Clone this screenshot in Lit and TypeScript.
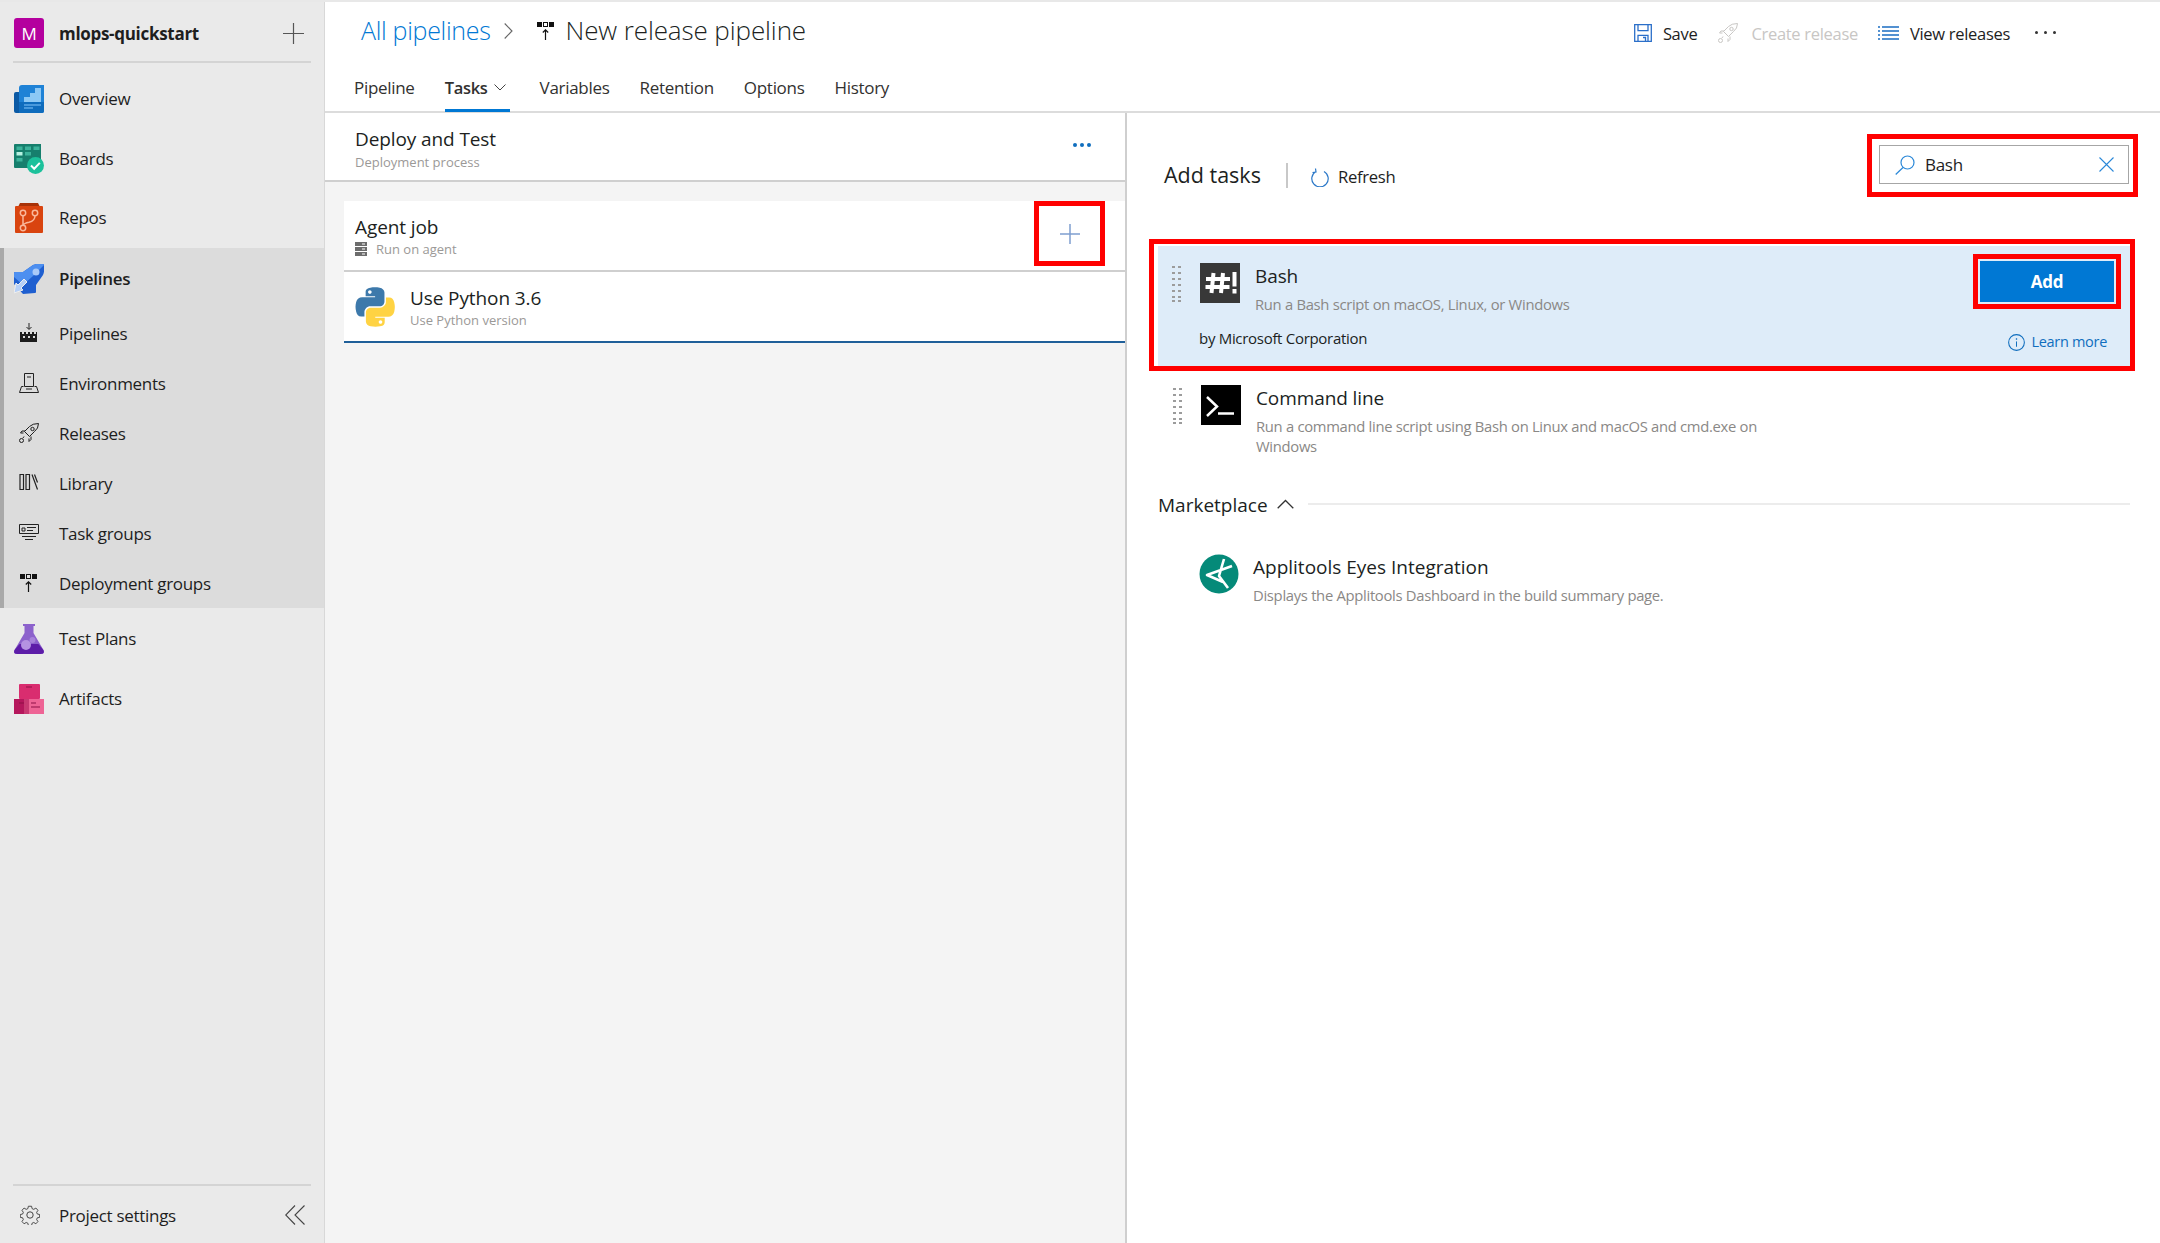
import {LitElement, html, css, svg} from 'lit';
import {customElement} from 'lit/decorators.js';

const icons = {
  overview: svg`<svg width="30" height="28" viewBox="0 0 30 28"><path d="M0 9q0-2 2-2h6v21H2q-2 0-2-2z" fill="#0b5aa5"/><path d="M5 3q0-3 3-3h22v26q0 2-2 2H5z" fill="#1f82d6"/><path d="M5 17h25v9q0 2-2 2H5z" fill="#0f6cbd"/><path d="M10 17v-5h6V8h5V3h6v14z" fill="#8cc8f5"/><path d="M10 20h17M10 23h9" stroke="#5ea8e6" stroke-width="1.4"/></svg>`,
  boards: svg`<svg width="30" height="30" viewBox="0 0 30 30"><path d="M0 1q0-1 1-1h26v18l-9 6H1q-1 0-1-1z" fill="#167f6d"/><g fill="#3cb39b"><rect x="2.500" y="2.500" width="6" height="3.500"/><rect x="11" y="2.500" width="6" height="3.500"/><rect x="19.500" y="2.500" width="6" height="3.500"/><rect x="11" y="8" width="6" height="3.500"/><rect x="2.500" y="14" width="6" height="3.500"/></g><rect x="2.500" y="8" width="6" height="3.500" fill="#b6f2e2"/><circle cx="21.500" cy="21.500" r="8.500" fill="#1cc19b"/><path d="M17 21.500l3.200 3.200 5.600-5.800" fill="none" stroke="#fff" stroke-width="2"/></svg>`,
  repos: svg`<svg width="28" height="30" viewBox="0 0 28 30"><path d="M3 4 5 0h18l2 4z" fill="#a83208"/><path d="M1 3h26q1 0 1 1v25q0 1-1 1H1q-1 0-1-1V4q0-1 1-1z" fill="#d9440f"/><g fill="none" stroke="#f9b79a" stroke-width="1.500"><circle cx="8" cy="10" r="2.700"/><circle cx="20" cy="10" r="2.700"/><circle cx="8" cy="25" r="2.700"/><path d="M8 12.700v9.600M20 12.700q0 5-6 6.500-5 1-6 3"/></g></svg>`,
  rocket: svg`<svg width="30" height="30" viewBox="0 0 30 30"><path d="M0 9q0-1 1-1h8L19 1q5-2 10-1 1 0 1 1 1 5-1 10l-7 10v7q0 1-1 1L9 30 0 20z" fill="#1f5fd0"/><path d="M9 8 19 1q5-2 10-1 1 0 1 1L19 12 9 21 0 13V9q0-1 1-1z" fill="#4d8ff0"/><circle cx="22" cy="8" r="3.500" fill="#a9c9f8"/><path d="M2 19l2 2 6-6 3 3-6 6 2 2-9 3z" fill="#b6d0f7" stroke="#eee" stroke-width="1"/></svg>`,
  flask: svg`<svg width="30" height="30" viewBox="0 0 30 30"><path d="M9 0h12v2h-1.500v7l10 17q2 4-3 4H3.500q-5 0-3-4l10-17V2H9z" fill="#8c62cc"/><path d="M5.600 20h18.800l5 6q1.500 4-3 4H3.500q-4.500 0-3-4z" fill="#5d1da8"/><circle cx="12" cy="21" r="5" fill="#b592e2"/><circle cx="18.500" cy="16" r="3" fill="#a783da"/></svg>`,
  artifacts: svg`<svg width="30" height="30" viewBox="0 0 30 30"><rect x="5" y="0" width="21" height="15" rx="1" fill="#d92d6f"/><rect x="0" y="15" width="15" height="15" fill="#b5175c"/><rect x="10" y="15" width="20" height="15" fill="#ee6495"/><rect x="10" y="15" width="5" height="15" fill="#c93a72"/><path d="M12 3h6M5 19h5M17 19h5M17 23h9" stroke="#8f1046" stroke-width="1"/></svg>`,
  pipe: svg`<svg width="20" height="20" viewBox="0 0 20 20"><path d="M10 0v6M7.500 4l2.500 2.500L12.500 4" fill="none" stroke="#222" stroke-width="1"/><path d="M1 9h2v2h2V9h2v2h2V9h2v2h2V9h2v2h2V9h1v10H1z" fill="#1c1c1c"/><g fill="#dcdcdc"><rect x="4" y="13" width="2" height="2"/><rect x="9" y="13" width="2" height="2"/><rect x="14" y="13" width="2" height="2"/></g></svg>`,
  env: svg`<svg width="20" height="20" viewBox="0 0 20 20" fill="none" stroke="#222" stroke-width="1"><path d="M5.500.5h9v13h-9zM2.500 13.500h2M15.500 13.500h2M2.500 13.500.5 19.500h19l-2-6"/><path d="M8 4h4M7 16h6"/></svg>`,
  release: svg`<svg width="20" height="20" viewBox="0 0 20 20" fill="none" stroke="currentColor" stroke-width="1"><path d="M19.500.5q-6 0-9 3l-5 5 5 5 5-5q4-3 4-8zM6 8H3L1.500 10h3M12 13.500v3l-2 2v-3"/><circle cx="13.500" cy="6" r="1.700"/><circle cx="2.500" cy="17.500" r="2"/><path d="M5 13.500 4 15"/></svg>`,
  library: svg`<svg width="20" height="20" viewBox="0 0 20 20" fill="none" stroke="#222" stroke-width="1.200"><path d="M1 1.500h3.500v15H1zM7 1.500h3.500v15H7zM13 1.500l5.500 15M15.500 1.500l3 8"/></svg>`,
  tasks: svg`<svg width="20" height="20" viewBox="0 0 20 20" fill="none" stroke="#222" stroke-width="1"><path d="M.5 1.500h19v9H.5zM3 5h3v3H3zM8 4.500h9M8 7.500h6M3 13.500h14M6 16.500h8"/></svg>`,
  deploy: svg`<svg width="20" height="20" viewBox="0 0 20 20"><rect x="1" y="1" width="5" height="5" fill="#111"/><rect x="7.500" y="1.500" width="4" height="4" fill="none" stroke="#111"/><rect x="13" y="1" width="5" height="5" fill="#111"/><path d="M9.500 19V9M6.800 11.500l2.700-2.700 2.700 2.700" fill="none" stroke="#111" stroke-width="1.200"/></svg>`,
  gear: svg`<svg width="20" height="20" viewBox="0 0 20 20" fill="none" stroke="#444" stroke-width="1"><circle cx="10" cy="10" r="3.200"/><path d="M8.300.8h3.400l.5 2.500 1.800.8 2.200-1.400 2.200 2.400-1.400 2.100.7 1.800 2.500.5v3l-2.500.5-.7 1.800 1.400 2.100-2.200 2.400-2.200-1.400-1.800.8-.5 2.500H8.300l-.5-2.500-1.800-.8-2.200 1.400-2.200-2.400 1.400-2.100-.7-1.800-2.500-.5v-3l2.500-.5.7-1.800-1.400-2.100 2.200-2.400L6 4.100l1.800-.8z" transform="scale(.95) translate(.5 .5)"/></svg>`,
  python: svg`<svg width="40" height="40" viewBox="0 0 110 112"><path d="M54.900.8c-4.600 0-9 .4-12.800 1.100C30.800 3.900 28.800 8 28.800 15.600v10h26.500v3.300H18.800c-7.700 0-14.400 4.600-16.500 13.400-2.400 10.100-2.500 16.400 0 26.900 1.900 7.800 6.300 13.400 14 13.400h9.100V70.500c0-8.700 7.600-16.400 16.500-16.400h26.400c7.400 0 13.200-6 13.200-13.400V15.600c0-7.100-6-12.500-13.200-13.700-4.500-.8-9.200-1.100-13.800-1.100zM40.600 8.800c2.700 0 5 2.300 5 5 0 2.800-2.200 5-5 5s-5-2.200-5-5c0-2.700 2.200-5 5-5z" fill="#3d79ab"/><path transform="rotate(180 55.500 56)" d="M54.900.8c-4.600 0-9 .4-12.800 1.100C30.800 3.900 28.800 8 28.800 15.600v10h26.500v3.300H18.800c-7.700 0-14.400 4.600-16.500 13.400-2.400 10.100-2.500 16.400 0 26.900 1.900 7.800 6.300 13.400 14 13.400h9.100V70.500c0-8.700 7.600-16.400 16.500-16.400h26.400c7.400 0 13.200-6 13.200-13.400V15.600c0-7.100-6-12.500-13.200-13.700-4.500-.8-9.200-1.100-13.800-1.100zM40.600 8.800c2.700 0 5 2.300 5 5 0 2.800-2.200 5-5 5s-5-2.200-5-5c0-2.700 2.200-5 5-5z" fill="#ffd343"/></svg>`,
  server: svg`<svg width="12" height="14" viewBox="0 0 12 14"><path d="M0 0h12v4H0zM0 5h12v4H0zM0 10h12v4H0z" fill="#6d6d6d"/><path d="M7 2h3M7 7h3M7 12h3" stroke="#fff" stroke-width="1"/></svg>`,
  applitools: svg`<svg width="40" height="40" viewBox="0 0 40 40"><circle cx="20" cy="20" r="19.500" fill="#058a79"/><path d="M25 5 20 22 29 34M33 12 8 21 24 28" fill="none" stroke="#fff" stroke-width="2.600" stroke-linejoin="round"/></svg>`,
  save: svg`<svg width="18" height="18" viewBox="0 0 18 18" fill="none" stroke="#2b6fc9" stroke-width="1.300"><path d="M.7.7h16.600v16.600H.7zM4 .7v6h10v-6M4 17.300v-6h10v6M9 13.500h2.500v3.800"/></svg>`,
  list: svg`<svg width="21" height="14" viewBox="0 0 21 14" stroke="#1b6ec2" stroke-width="1.300"><path d="M0 1h2M0 5h2M0 9h2M0 13h2M4 1h17M4 5h17M4 9h17M4 13h17"/></svg>`,
  search: svg`<svg width="20" height="20" viewBox="0 0 20 20" fill="none" stroke="#2b88d8" stroke-width="1.200"><circle cx="12.500" cy="7.500" r="6.500"/><path d="M8 12.500.7 19.500"/></svg>`,
  clear: svg`<svg width="15" height="15" viewBox="0 0 15 15" stroke="#2b88d8" stroke-width="1.100"><path d="M.5.500l14 14M14.500.500l-14 14"/></svg>`,
  refresh: svg`<svg width="18" height="20" viewBox="0 0 18 20" fill="none" stroke="#2b78c8" stroke-width="1.200"><path d="M5 3.500a8.200 8.200 0 1 0 8 0M4.500.5 5 4 1.500 4.500" transform="translate(0 1)"/></svg>`,
  info: svg`<svg width="17" height="17" viewBox="0 0 16 16" fill="none" stroke="#106ebe" stroke-width="1"><circle cx="8" cy="8" r="7.400"/><path d="M8 7v5"/><path d="M8 4v1.400" stroke-width="1.200"/></svg>`,
  hashbang: svg`<svg width="40" height="40" viewBox="0 0 40 40"><rect width="40" height="40" fill="#383838"/><path d="M13.500 10 11.500 30M23 10 21 30M6 16h24M5.500 24h24" fill="none" stroke="#fff" stroke-width="4"/><path d="M32.500 9h4v14.500h-4zM32.500 26h4v4.500h-4z" fill="#fff"/></svg>`,
  prompt: svg`<svg width="40" height="40" viewBox="0 0 40 40"><rect width="40" height="40" fill="#000"/><path d="M6 12l10 9.500L6 31" fill="none" stroke="#fff" stroke-width="2.500"/><path d="M17 28.500h16" stroke="#fff" stroke-width="2.500"/></svg>`,
};

const grip = svg`<svg width="9" height="36" viewBox="0 0 9 36" fill="#9c9c9c">${[0, 6, 12, 18, 24, 30, 34].map(
  (y) => svg`<rect x="0" y=${y} width="3" height="2"/><rect x="6" y=${y} width="3" height="2"/>`,
)}</svg>`;

const chevronDown = svg`<svg width="12" height="7" viewBox="0 0 12 7" fill="none" stroke="#444" stroke-width="1"><path d="M.5.500 6 6l5.500-5.500"/></svg>`;

const mainNav = [
  {label: 'Overview', icon: icons.overview},
  {label: 'Boards', icon: icons.boards},
  {label: 'Repos', icon: icons.repos},
];
const subNav = [
  {label: 'Pipelines', icon: icons.pipe},
  {label: 'Environments', icon: icons.env},
  {label: 'Releases', icon: icons.release},
  {label: 'Library', icon: icons.library},
  {label: 'Task groups', icon: icons.tasks},
  {label: 'Deployment groups', icon: icons.deploy},
];
const tabs = ['Pipeline', 'Tasks', 'Variables', 'Retention', 'Options', 'History'];

@customElement('app-root')
export class AppRoot extends LitElement {
  static styles = css`
    :host {
      display: block;
      width: 2160px;
      height: 1243px;
      overflow: hidden;
      background: #fff;
      color: #1e1e1e;
      font-family: 'Open Sans', 'Noto Sans', sans-serif;
      font-size: 17px;
      letter-spacing: -0.3px;
    }
    svg {
      display: block;
      flex: none;
    }
    .page {
      display: flex;
      height: 1241px;
      border-top: 2px solid #e8e8e8;
    }

    /* sidebar */
    .side {
      width: 324px;
      flex: none;
      display: flex;
      flex-direction: column;
      background: #eaeaea;
      border-right: 1px solid #d8d8d8;
    }
    .org {
      height: 61px;
      margin: 0 13px 7px;
      padding: 3px 0 0 1px;
      display: flex;
      align-items: center;
      border-bottom: 2px solid #d4d4d4;
      box-sizing: border-box;
      flex: none;
    }
    .avatar {
      width: 30px;
      height: 30px;
      border-radius: 3px;
      background: #b4009e;
      color: #fff;
      display: flex;
      align-items: center;
      justify-content: center;
      font-size: 17px;
      margin-right: 15px;
    }
    .org-name {
      font-weight: 700;
      flex: 1;
    }
    .nav-row {
      height: 60px;
      display: flex;
      align-items: center;
      padding: 0 0 3px 14px;
      box-sizing: border-box;
      gap: 15px;
    }
    .nav-row .ic {
      width: 30px;
      display: flex;
      justify-content: center;
    }
    .nav-row.short {
      height: 58px;
    }
    .group {
      background: #dcdcdc;
      border-left: 4px solid #a9a9a9;
      margin-bottom: 2px;
    }
    .group .nav-row {
      padding: 1px 0 0 10px;
    }
    .group .sub {
      height: 50px;
    }
    .group .sub .ic {
      margin-top: -2px;
    }
    .strong {
      font-weight: 600;
    }
    .spacer {
      flex: 1;
    }
    .settings {
      height: 59px;
      margin: 0 13px;
      border-top: 2px solid #d4d4d4;
      display: flex;
      align-items: center;
      padding: 1px 0 0 7px;
      gap: 19px;
      box-sizing: border-box;
    }
    .settings span {
      flex: 1;
    }

    /* header */
    .main {
      flex: 1;
      min-width: 0;
      display: flex;
      flex-direction: column;
    }
    .top {
      height: 57px;
      flex: none;
      display: flex;
      align-items: center;
      padding-left: 36px;
    }
    .crumb {
      font-size: 25px;
      font-weight: 300;
      color: #0078d4;
      letter-spacing: -0.3px;
      margin-top: -2px;
    }
    .crumb-sep {
      margin: 0 23px 0 13px;
    }
    .title {
      font-size: 26px;
      font-weight: 300;
      color: #201f1e;
      letter-spacing: -0.1px;
      margin: -2px 0 0 10px;
    }
    .actions {
      margin-left: auto;
      margin-right: 104px;
      margin-top: 5px;
      display: flex;
      align-items: center;
      font-size: 16.500px;
    }
    .action {
      display: flex;
      align-items: center;
      gap: 11px;
      margin-right: 20px;
    }
    .action:first-child {
      margin-right: 21px;
    }
    .action.off {
      color: #c8c6c4;
      gap: 13px;
    }
    .more {
      display: flex;
      gap: 6px;
      margin-left: 5px;
      margin-top: -2px;
    }
    .more i {
      width: 3px;
      height: 3px;
      border-radius: 50%;
      background: #333;
    }
    .tabs {
      height: 52px;
      flex: none;
      display: flex;
      padding-left: 29px;
      gap: 30px;
      border-bottom: 2px solid #dcdcdc;
    }
    .tab {
      display: flex;
      align-items: center;
      gap: 7px;
      height: 52px;
      box-sizing: border-box;
      padding-top: 4px;
      color: #323130;
    }
    .tab.on {
      font-weight: 600;
      font-size: 16.500px;
      gap: 6px;
      border-bottom: 3px solid #0078d4;
      padding: 7px 4px 0 0;
      margin-bottom: -1px;
      height: 53px;
    }

    /* editor */
    .split {
      flex: 1;
      display: flex;
      min-height: 0;
    }
    .left {
      width: 800px;
      flex: none;
      background: #f4f4f4;
      border-right: 2px solid #cfcfcf;
    }
    .stage {
      height: 64px;
      background: #fff;
      border-bottom: 2px solid #cfcfcf;
      padding: 3px 34px 0 30px;
      display: flex;
      align-items: center;
      justify-content: space-between;
    }
    .stage .caption {
      margin-top: 1px;
    }
    .name {
      font-size: 19px;
      line-height: 26px;
      color: #201f1e;
      letter-spacing: -0.1px;
    }
    .caption {
      font-size: 13px;
      line-height: 18px;
      color: #9b9997;
      letter-spacing: 0;
    }
    .dots {
      display: flex;
      gap: 3px;
      margin-top: -6px;
    }
    .dots i {
      width: 4px;
      height: 4px;
      border-radius: 50%;
      background: #106ebe;
    }
    .job {
      margin: 19px 0 0 19px;
      background: #fff;
    }
    .job-head {
      height: 71px;
      border-bottom: 2px solid #cfcfcf;
      padding-left: 11px;
      padding-right: 20px;
      display: flex;
      justify-content: space-between;
      box-sizing: border-box;
    }
    .job-text {
      padding-top: 13px;
    }
    .run {
      display: flex;
      align-items: center;
      gap: 9px;
    }
    .plus-box {
      width: 71px;
      height: 65px;
      border: 5px solid #f00;
      box-sizing: border-box;
      display: flex;
      align-items: center;
      justify-content: center;
    }
    .task {
      height: 71px;
      border-bottom: 2px solid #1f5f99;
      display: flex;
      align-items: center;
      gap: 15px;
      padding-left: 11px;
      box-sizing: border-box;
    }

    /* add tasks */
    .right {
      flex: 1;
      min-width: 0;
      padding: 21px 22px 0 23px;
    }
    .right-head {
      height: 85px;
      display: flex;
      align-items: flex-start;
      padding-left: 14px;
    }
    .add-title {
      font-size: 21.500px;
      color: #201f1e;
      margin-top: 26px;
      line-height: 30px;
      letter-spacing: 0;
    }
    .vline {
      width: 2px;
      height: 25px;
      background: #c8c8c8;
      margin: 29px 23px 0 25px;
    }
    .refresh {
      display: flex;
      align-items: center;
      gap: 9px;
      margin-top: 31px;
      line-height: 24px;
      font-size: 16.700px;
    }
    .search-box {
      margin-left: auto;
      width: 271px;
      height: 63px;
      border: 5px solid #f00;
      padding: 6px 4px 8px 7px;
      box-sizing: border-box;
      background: #fff;
    }
    .search {
      height: 39px;
      border: 1px solid #a6a6a6;
      box-sizing: border-box;
      display: flex;
      align-items: center;
      padding: 0 14px 0 15px;
      gap: 10px;
    }
    .search span {
      flex: 1;
    }
    .hit {
      margin-top: 20px;
      margin-left: -1px;
      width: 986px;
      height: 132px;
      border: 5px solid #f00;
      box-sizing: border-box;
      padding: 2px 0 0 4px;
    }
    .hit-in {
      background: #deecf9;
      height: 120px;
      position: relative;
      display: flex;
      flex-direction: column;
    }
    .entry {
      display: flex;
      align-items: flex-start;
    }
    .grip {
      margin: 3px 19px 0 14px;
    }
    .hit-in .entry {
      padding-top: 17px;
    }
    .entry-text {
      margin-left: 15px;
    }
    .entry-name {
      font-size: 19px;
      line-height: 26px;
      color: #201f1e;
      letter-spacing: -0.1px;
    }
    .entry-desc {
      font-size: 14.800px;
      line-height: 20px;
      color: #8a8886;
      margin-top: 5px;
      width: 530px;
    }
    .by {
      font-size: 15px;
      color: #201f1e;
      margin-left: 41px;
      margin-top: 14px;
      line-height: 20px;
    }
    .add-box {
      position: absolute;
      right: 9px;
      top: 8px;
      width: 148px;
      height: 55px;
      border: 5px solid #f00;
      box-sizing: border-box;
      padding: 2px;
    }
    .add-btn {
      height: 41px;
      background: #0078d4;
      color: #fff;
      font-weight: 700;
      font-size: 17px;
      display: flex;
      align-items: center;
      justify-content: center;
    }
    .learn {
      position: absolute;
      right: 23px;
      top: 86px;
      display: flex;
      align-items: center;
      gap: 6px;
      color: #106ebe;
      font-size: 14.500px;
      line-height: 20px;
    }
    .plain {
      margin-top: 14px;
    }
    .plain .grip {
      margin-left: 23px;
    }
    .market-head {
      display: flex;
      align-items: center;
      margin: 36px 8px 0 8px;
      font-size: 19px;
      line-height: 26px;
      color: #201f1e;
      letter-spacing: 0;
    }
    .market-head i {
      flex: 1;
      height: 2px;
      background: #ececec;
      margin-left: 14px;
      margin-top: -3px;
    }
    .caret {
      margin-left: 9px;
      margin-top: -2px;
    }
    .mk {
      margin: 36px 0 0 49px;
      display: flex;
      gap: 14px;
    }
    .mk .entry-text {
      margin: 0;
    }
    .mk .entry-name {
      letter-spacing: 0;
    }
    .mk .entry-desc {
      width: auto;
    }
  `;

  render() {
    return html`
      <div class="page">
        ${this.renderSide()}
        <div class="main">
          ${this.renderTop()}
          <div class="split">
            ${this.renderLeft()}
            ${this.renderRight()}
          </div>
        </div>
      </div>
    `;
  }

  renderSide() {
    return html`
      <nav class="side">
        <div class="org">
          <div class="avatar">M</div>
          <span class="org-name">mlops-quickstart</span>
          <svg style="margin-right:7px" width="21" height="21" viewBox="0 0 21 21" stroke="#555" stroke-width="1.200"><path d="M0 10.500h21M10.500 0v21"/></svg>
        </div>
        ${mainNav.map(
          (n, i) => html`<div class="nav-row ${i === 2 ? 'short' : ''}"><div class="ic">${n.icon}</div>${n.label}</div>`,
        )}
        <div class="group">
          <div class="nav-row strong"><div class="ic">${icons.rocket}</div>Pipelines</div>
          ${subNav.map(
            (n) => html`<div class="nav-row sub"><div class="ic">${n.icon}</div>${n.label}</div>`,
          )}
        </div>
        <div class="nav-row"><div class="ic">${icons.flask}</div>Test Plans</div>
        <div class="nav-row"><div class="ic">${icons.artifacts}</div>Artifacts</div>
        <div class="spacer"></div>
        <div class="settings">
          ${icons.gear}
          <span>Project settings</span>
          <svg style="margin-right:6px" width="20" height="20" viewBox="0 0 20 20" fill="none" stroke="#444" stroke-width="1.100"><path d="M10 .5.700 10 10 19.500M19.500.5 10 10l9.500 9.500"/></svg>
        </div>
      </nav>
    `;
  }

  renderTop() {
    return html`
      <div class="top">
        <span class="crumb">All pipelines</span>
        <svg class="crumb-sep" width="9" height="16" viewBox="0 0 9 16" fill="none" stroke="#666" stroke-width="1.100"><path d="M.7.500 8 8 .7 15.500"/></svg>
        ${icons.deploy}
        <span class="title">New release pipeline</span>
        <div class="actions">
          <div class="action">${icons.save}Save</div>
          <div class="action off">${icons.release}Create release</div>
          <div class="action">${icons.list}View releases</div>
          <span class="more"><i></i><i></i><i></i></span>
        </div>
      </div>
      <div class="tabs">
        ${tabs.map((t) =>
          t === 'Tasks'
            ? html`<div class="tab on">${t}${chevronDown}</div>`
            : html`<div class="tab">${t}</div>`,
        )}
      </div>
    `;
  }

  renderLeft() {
    return html`
      <div class="left">
        <div class="stage">
          <div>
            <div class="name">Deploy and Test</div>
            <div class="caption">Deployment process</div>
          </div>
          <div class="dots"><i></i><i></i><i></i></div>
        </div>
        <div class="job">
          <div class="job-head">
            <div class="job-text">
              <div class="name">Agent job</div>
              <div class="caption run">${icons.server}Run on agent</div>
            </div>
            <div class="plus-box">
              <svg width="20" height="20" viewBox="0 0 20 20" stroke="#7f9fd0" stroke-width="1.500"><path d="M0 10h20M10 0v20"/></svg>
            </div>
          </div>
          <div class="task">
            ${icons.python}
            <div>
              <div class="name">Use Python 3.6</div>
              <div class="caption">Use Python version</div>
            </div>
          </div>
        </div>
      </div>
    `;
  }

  renderRight() {
    return html`
      <div class="right">
        <div class="right-head">
          <span class="add-title">Add tasks</span>
          <span class="vline"></span>
          <div class="refresh">${icons.refresh}Refresh</div>
          <div class="search-box">
            <div class="search">${icons.search}<span>Bash</span>${icons.clear}</div>
          </div>
        </div>
        <div class="hit">
          <div class="hit-in">
            <div class="entry">
              <div class="grip">${grip}</div>
              ${icons.hashbang}
              <div class="entry-text">
                <div class="entry-name">Bash</div>
                <div class="entry-desc">Run a Bash script on macOS, Linux, or Windows</div>
              </div>
            </div>
            <div class="by">by Microsoft Corporation</div>
            <div class="add-box"><div class="add-btn">Add</div></div>
            <div class="learn">${icons.info}Learn more</div>
          </div>
        </div>
        <div class="entry plain">
          <div class="grip">${grip}</div>
          ${icons.prompt}
          <div class="entry-text">
            <div class="entry-name">Command line</div>
            <div class="entry-desc">Run a command line script using Bash on Linux and macOS and cmd.exe on Windows</div>
          </div>
        </div>
        <div class="market-head">
          Marketplace
          <svg class="caret" width="17" height="10" viewBox="0 0 17 10" fill="none" stroke="#333" stroke-width="1.300"><path d="M.7 9.300 8.500 1.500l7.800 7.800"/></svg>
          <i></i>
        </div>
        <div class="mk">
          ${icons.applitools}
          <div class="entry-text">
            <div class="entry-name">Applitools Eyes Integration</div>
            <div class="entry-desc">Displays the Applitools Dashboard in the build summary page.</div>
          </div>
        </div>
      </div>
    `;
  }
}
